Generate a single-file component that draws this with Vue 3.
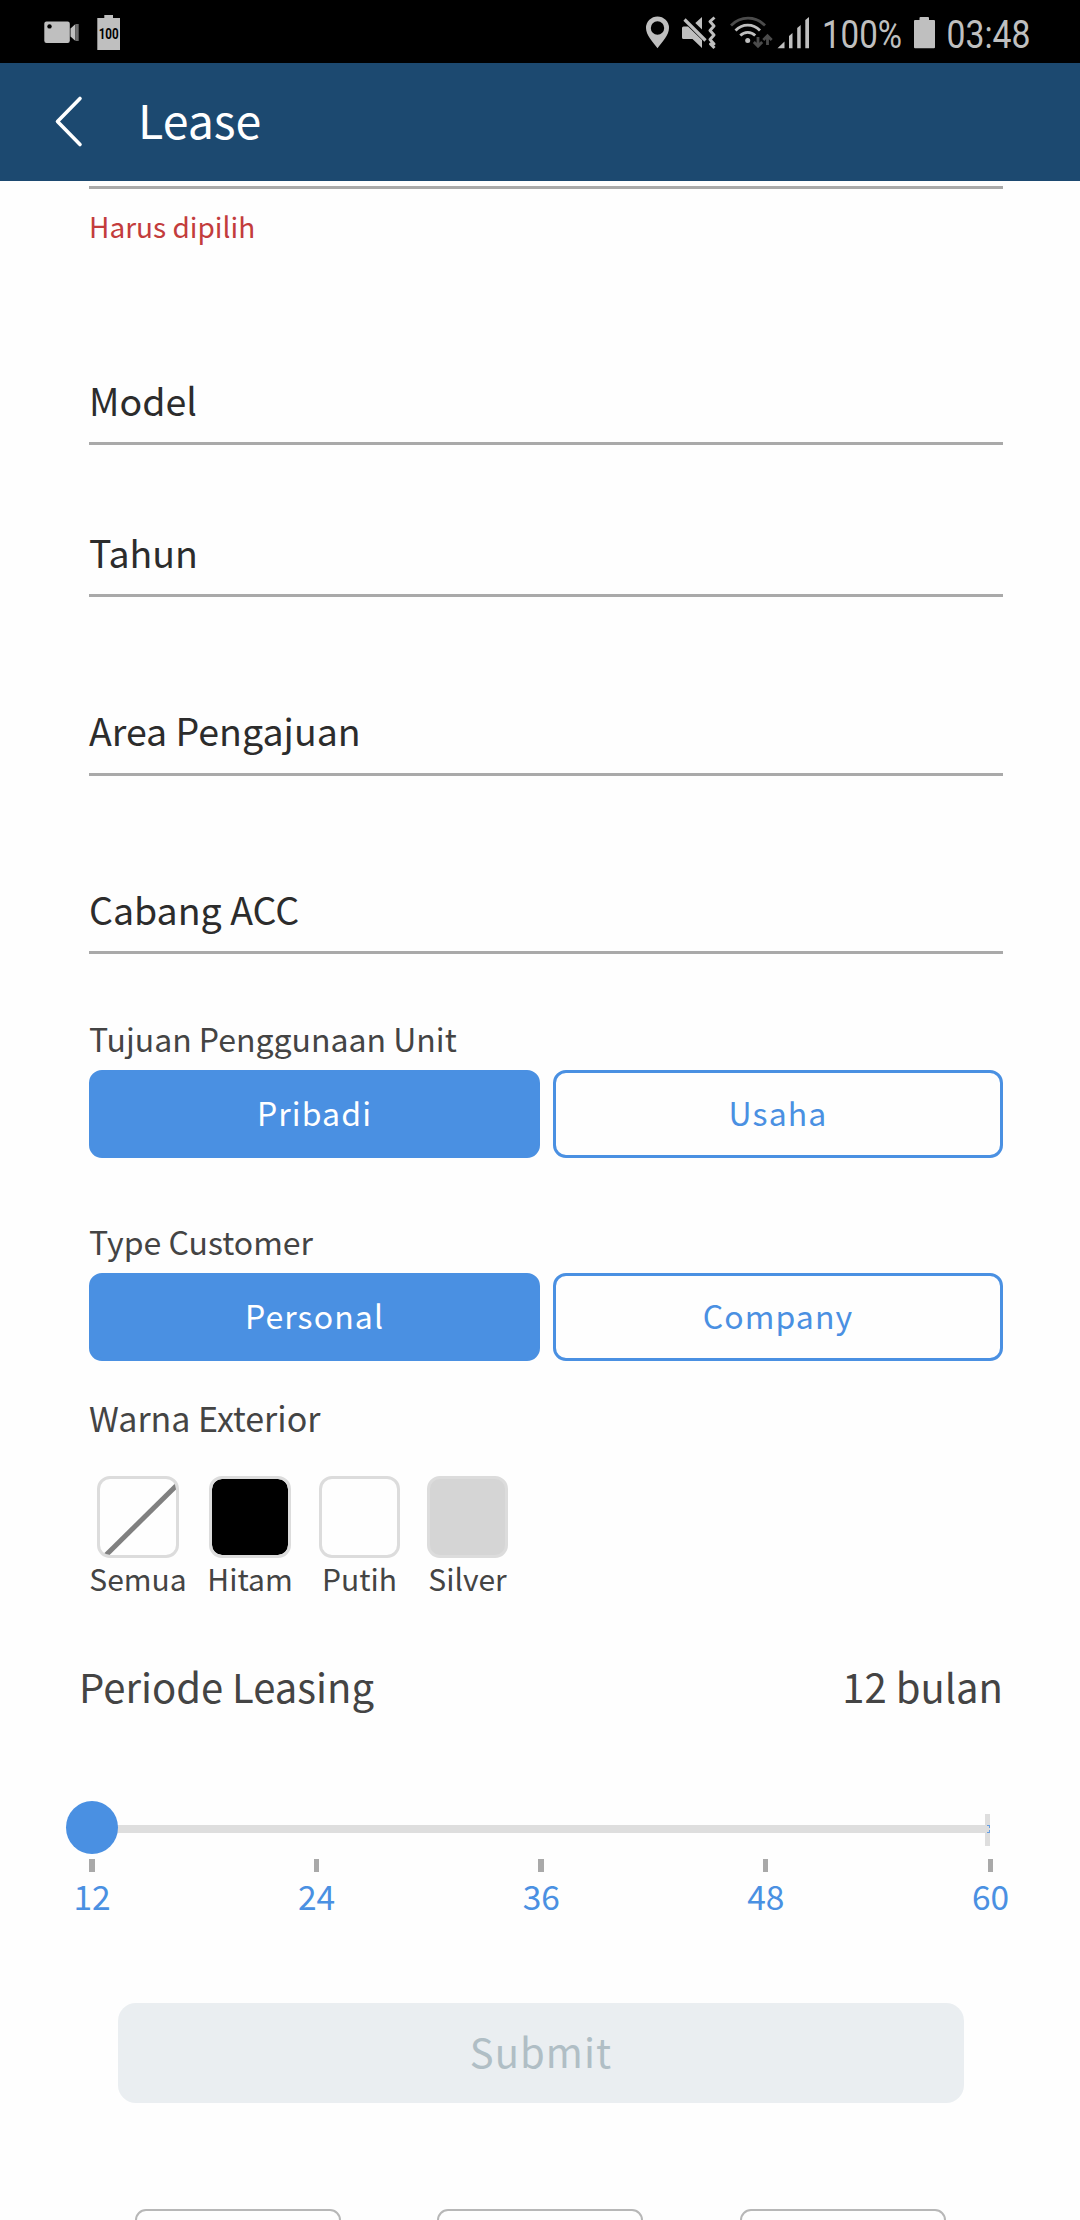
<script setup>
import { ref } from 'vue'

const fields = [
  { label: 'Model', cls: 'model' },
  { label: 'Tahun', cls: 'tahun' },
  { label: 'Area Pengajuan', cls: 'area' },
  { label: 'Cabang ACC', cls: 'cabang' },
]
const groups = ref([
  { label: 'Tujuan Penggunaan Unit', options: ['Pribadi', 'Usaha'], selected: 'Pribadi' },
  { label: 'Type Customer', options: ['Personal', 'Company'], selected: 'Personal' },
])
const colors = [
  { name: 'Semua', cls: 'all' },
  { name: 'Hitam', cls: 'black' },
  { name: 'Putih', cls: 'white' },
  { name: 'Silver', cls: 'silver' },
]
const periods = [12, 24, 36, 48, 60]
const period = ref(12)
</script>

<template>
  <div class="screen">
    <div class="status">
      <svg class="left-icons" width="80" height="63" viewBox="42 0 80 63">
        <g fill="#bfbfbf">
          <rect x="44.3" y="21.5" width="25.5" height="21.5" rx="2.2" />
          <path d="M70.5 28.5L75.5 24V41L70.5 36.500z" />
          <rect x="97.300" y="18" width="22.700" height="32" />
          <rect x="104.300" y="15" width="8.700" height="4" />
        </g>
        <rect x="76" y="24" width="2.700" height="17" fill="#6c6c6c" />
        <circle cx="49.500" cy="26.400" r="2.200" fill="#000" />
        <text x="108.700" y="39.200" class="mini" text-anchor="middle" textLength="20" lengthAdjust="spacingAndGlyphs">100</text>
      </svg>
      <div class="right">
        <svg width="170" height="63" viewBox="644 0 170 63">
          <path fill="#bfbfbf" fill-rule="evenodd" d="M657.500 16.500a11.500 11.500 0 0 1 11.500 11.500c0 7-6.500 13.500-11.500 20.300c-5-6.800-11.500-13.300-11.500-20.300a11.500 11.500 0 0 1 11.500-11.500zM657.500 21.300a6.700 6.700 0 1 0 0 13.400a6.700 6.700 0 1 0 0-13.400z" />
          <g fill="#bfbfbf">
            <path d="M683.500 26.500H688L702 40V48L692.500 39H683.500Q682 39 682 37.500V28Q682 26.500 683.500 26.500z" />
            <path d="M695.300 23L702 17V29.500z" />
          </g>
          <path d="M684.500 19.500L705.500 40.500" stroke="#bfbfbf" stroke-width="3.200" fill="none" />
          <path d="M714.500 17.500L710 21.500L714 26L710 30.500L714 35L710 39.500L714 44L710.500 44L714.500 48" stroke="#bfbfbf" stroke-width="3" fill="none" stroke-linejoin="round" />
          <g fill="none" stroke="#bfbfbf" stroke-width="2.800">
            <path d="M735.500 30.500C742.500 23.300 753 23.300 760 30.500" />
            <path d="M740.300 35.500C744.500 31.300 751 31.300 755.200 35.500" />
          </g>
          <path d="M731 25.500C740.500 15.700 755.500 15.700 765 25.500" stroke="#4b4b4b" stroke-width="2.700" fill="none" />
          <circle cx="747.700" cy="40.500" r="2.500" fill="#bfbfbf" />
          <g stroke="#4b4b4b" stroke-width="2.800" fill="none">
            <path d="M758 37V46.500M753.800 42L758 46.300L762.200 42" />
            <path d="M767.500 45V35.500M763.300 40L767.500 35.700L771.700 40" />
          </g>
          <g fill="#bfbfbf">
            <path d="M777.500 48.200L784.500 41.500V48.200z" />
            <path d="M789 48.200V36L792.500 33V48.200z" />
            <path d="M797.200 48.200V28L800.700 25V48.200z" />
            <path d="M805.300 48.200V20L809 17V48.200z" />
          </g>
        </svg>
        <svg width="240" height="63" viewBox="814 0 240 63">
          <text x="822" y="48.200" class="stat" textLength="80" lengthAdjust="spacingAndGlyphs">100%</text>
          <path fill="#bfbfbf" d="M914 21Q914 20 915 20H919.500V18Q919.500 17 920.500 17H928Q929 17 929 18V20H934Q935 20 935 21V47.200Q935 48.200 934 48.200H915Q914 48.200 914 47.200z" />
          <text x="946.500" y="48.200" class="stat" textLength="84" lengthAdjust="spacingAndGlyphs">03:48</text>
        </svg>
      </div>
    </div>

    <header class="bar">
      <svg width="30" height="54" viewBox="0 0 30 54" fill="none">
        <path d="M26 3.500L3.500 26.500L26 49.500" stroke="#fff" stroke-width="3.600" stroke-linecap="round" stroke-linejoin="round" />
      </svg>
      <h1>Lease</h1>
    </header>

    <main>
      <div class="rule"></div>
      <p class="error">Harus dipilih</p>

      <div v-for="f in fields" :key="f.label" class="field" :class="f.cls"><span>{{ f.label }}</span></div>

      <section v-for="g in groups" :key="g.label" class="group">
        <div class="caption">{{ g.label }}</div>
        <div class="options">
          <button v-for="o in g.options" :key="o" :class="{ on: g.selected === o }" @click="g.selected = o">{{ o }}</button>
        </div>
      </section>

      <div class="caption exterior"><span>Warna Exterior</span></div>
      <div class="swatches">
        <div v-for="c in colors" :key="c.name" class="swatch" :class="c.cls">
          <div class="chip">
            <svg v-if="c.cls === 'all'" width="76" height="76" viewBox="0 0 76 76">
              <path d="M5.500 76.500L77 6" stroke="#808080" stroke-width="5" />
            </svg>
          </div>
          <span>{{ c.name }}</span>
        </div>
      </div>
    </main>

    <div class="period"><span>Periode Leasing</span><span>{{ period }} bulan</span></div>
    <div class="slider">
      <div class="handle"></div>
      <div class="track"></div>
      <svg class="end" width="5" height="32" viewBox="0 0 5 32">
        <path d="M0 0H5V32H0z" fill="#dedede" />
        <path d="M2 11H5V14H4V12H2zM2 19H5V16H4V18H2z" fill="#4a90e2" opacity=".8" />
      </svg>
    </div>
    <div class="scale">
      <div v-for="p in periods" :key="p" class="mark" @click="period = p"><i :class="{ wide: p === 12 || p === 36 }"></i><span>{{ p }}</span></div>
    </div>

    <button class="submit" disabled>Submit</button>

    <div class="cards">
      <div v-for="n in 3" :key="n" class="card"></div>
    </div>
  </div>
</template>

<style>
body { margin: 0; background: #fefefe; }
</style>

<style scoped>
* { box-sizing: border-box; }
.screen {
  width: 1080px;
  height: 2220px;
  overflow: hidden;
  background: #fefefe;
  font-family: "Noto Sans CJK SC", "Noto Sans", sans-serif;
  color: #444;
  display: flex;
  flex-direction: column;
}
.screen > * { flex-shrink: 0; }
.status {
  height: 63px;
  background: #000;
  display: flex;
  justify-content: space-between;
  padding: 0 26px 0 42px;
}
.status svg { display: block; }
.right { display: flex; }
.mini { font: 700 14px Roboto, sans-serif; fill: #000; }
.stat { font: 400 39.5px Roboto, sans-serif; fill: #bfbfbf; }
.bar {
  height: 118px;
  background: #1c4970;
  display: flex;
  align-items: flex-start;
  padding-left: 54px;
}
.bar svg { margin-top: 32px; }
.bar h1 {
  margin: 29px 0 0 54px;
  font-size: 46.5px;
  line-height: 54px;
  font-weight: 400;
  color: #fff;
}
main { padding: 5px 77px 0 89px; }
.rule { height: 3px; background: #a9a9a9; }
.error {
  margin: 17px 0 0;
  font-size: 28px;
  line-height: 40px;
  color: #c33c3c;
}
.field {
  display: flex;
  border-bottom: 3px solid #a9a9a9;
  padding-bottom: 16px;
  font-size: 37.5px;
  line-height: 52px;
  color: #2c2c2c;
}
.model { margin-top: 128px; }
.tahun { margin-top: 81px; }
.area { margin-top: 107px; padding-bottom: 17px; }
.cabang { margin-top: 107px; }
.group { padding-top: 61px; }
.field + .group { padding-top: 62px; }
.caption { font-size: 32px; line-height: 44px; }
.options {
  margin-top: 10px;
  display: grid;
  grid-template-columns: 451px 450px;
  gap: 13px;
}
.options button {
  height: 88px;
  padding: 0 0 4px;
  border: 3px solid #4a90e2;
  border-radius: 13px;
  background: #fefefe;
  color: #4a90e2;
  font-family: inherit;
  font-size: 32px;
  line-height: 44px;
  letter-spacing: 1.1px;
}
.options button.on { background: #4a90e2; color: #fff; }
.exterior { margin-top: 35px; font-size: 34px; }
.swatches {
  display: flex;
  margin-top: 36px;
}
.swatch {
  display: flex;
  flex-direction: column;
  align-items: center;
  font-size: 30px;
  line-height: 40px;
}
.all { width: 98px; }
.black { width: 82px; margin-left: 22px; }
.white { width: 81px; margin-left: 28px; }
.silver { width: 81px; margin-left: 27px; }
.swatch span { white-space: nowrap; }
.chip {
  width: 82px;
  height: 82px;
  flex-shrink: 0;
  border: 3px solid #dcdcdc;
  border-radius: 13px;
  overflow: hidden;
}
.chip svg { display: block; }
.white .chip, .silver .chip { width: 81px; }
.black .chip { background: #000 padding-box; }
.silver .chip { background: #d5d5d5; }
.period {
  margin-top: 61px;
  padding: 0 77px 0 79px;
  display: flex;
  justify-content: space-between;
  font-size: 40px;
  line-height: 54px;
}
.slider {
  margin: 88px 90px 0 66px;
  height: 53px;
  display: flex;
  align-items: flex-start;
}
.handle {
  width: 52px;
  height: 53px;
  border-radius: 50%;
  background: #4a90e2;
}
.track {
  flex: 1;
  height: 8px;
  margin-top: 24px;
  margin-left: -4px;
  background: #dedede;
  position: relative;
  z-index: -1;
}
.slider, .end { position: relative; z-index: 0; }
.end { margin-top: 13px; }
.scale {
  margin: 5px 59.5px 0 62px;
  display: flex;
  justify-content: space-between;
}
.mark {
  width: 60px;
  display: flex;
  flex-direction: column;
  align-items: center;
  color: #4a90e2;
  font-size: 33.5px;
  line-height: 44px;
}
.mark i { width: 5px; height: 13px; margin-bottom: 2px; background: #a9a9a9; }
.mark i.wide { width: 6px; }
.submit {
  margin: 85px 0 0 118px;
  width: 846px;
  height: 100px;
  padding: 0 0 5px;
  border: 0;
  border-radius: 18px;
  background: #eaeef1;
  color: #b0bec5;
  font-family: inherit;
  font-size: 40px;
  line-height: 54px;
  letter-spacing: 1.1px;
}
.cards { display: flex; gap: 96.5px; margin: 106px 0 0 134.5px; }
.card {
  width: 206px;
  height: 60px;
  border: 2px solid #b7b7b7;
  border-radius: 11px;
}
</style>
